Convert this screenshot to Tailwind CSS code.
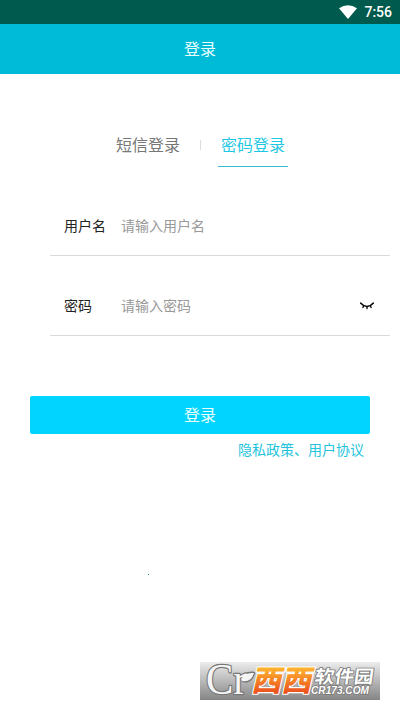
<!DOCTYPE html>
<html lang="zh-CN">
<head>
<meta charset="utf-8">
<meta name="viewport" content="width=device-width, initial-scale=1">
<title>登录</title>
<script src="https://cdn.jsdelivr.net/npm/@tailwindcss/browser@4"></script>
</head>
<body class="bg-white">
<div class="relative flex h-[710px] w-[400px] flex-col overflow-hidden bg-white font-['Noto_Sans_CJK_SC',sans-serif]">
  <div class="flex h-6 shrink-0 items-center justify-end bg-[#005a4d] pr-2">
    <svg class="mr-[7px] h-[14px] w-[18px]" viewBox="0 0 18 14"><path d="M0 3.3Q9-3 18 3.3L9 14Z" fill="#fff"/></svg>
    <span class="font-[Roboto,sans-serif] text-[14px] leading-6 font-medium text-white">7:56</span>
  </div>
  <header class="flex h-[50px] shrink-0 items-center justify-center bg-[#00bbd8] pb-[2px] text-base leading-none text-[#eaffff]">登录</header>

  <nav class="mt-[50px] ml-[108px] flex h-[43px] text-base leading-[40px]">
    <span class="w-20 text-center text-[#777]">短信登录</span>
    <i class="mt-4 ml-3 h-[10px] w-px bg-[#ddd]"></i>
    <span class="ml-[17px] w-[70px] border-b border-[#35b9cf] text-center text-[#1fc8e3]">密码登录</span>
  </nav>

  <form class="mt-[29px] ml-[50px] w-[340px] text-sm">
    <label class="flex h-[60px] items-center border-b border-[#dadada] pb-[2px]">
      <span class="ml-[14px] w-[57px] text-[#222]">用户名</span>
      <span class="text-[#999]">请输入用户名</span>
    </label>
    <label class="mt-5 flex h-[60px] items-center border-b border-[#dadada] pb-[2px]">
      <span class="ml-[14px] w-[57px] text-[#222]">密码</span>
      <span class="text-[#999]">请输入密码</span>
      <svg class="mt-[2px] mr-4 ml-auto h-[8px] w-[14px]" viewBox="0 0 14 8" fill="none" stroke="#000" stroke-linecap="round"><path d="M.8 1.2Q7 7.8 13.2 1.2" stroke-width="1.6"/><path d="M3.6 4 2.9 5.6M7 5V6.7M10.4 4l.7 1.6" stroke-width="1.3"/></svg>
    </label>
  </form>

  <button class="mt-[60px] ml-[30px] h-[38px] w-[340px] shrink-0 rounded-[2px] bg-[#00d4ff] pb-[2px] text-base leading-[36px] text-[#eaffff]">登录</button>
  <p class="mt-[5px] pr-9 text-right text-sm leading-5 text-[#23c4dc]">隐私政策、用户协议</p>

  <i class="absolute top-[574px] left-[148px] size-px bg-[#16879b]"></i>

  <svg class="absolute top-[658px] left-[200px] h-[42px] w-[180px] overflow-visible" viewBox="0 0 180 42">
    <defs>
      <linearGradient id="band" x2="0" y2="1"><stop stop-color="#ececec"/><stop offset=".45" stop-color="#bdbdbd"/><stop offset="1" stop-color="#858585"/></linearGradient>
      <linearGradient id="orange" x2="0" y2="1"><stop offset=".25" stop-color="#fdb52e"/><stop offset=".85" stop-color="#ec4f1d"/></linearGradient>
    </defs>
    <rect y="4" width="180" height="38" fill="url(#band)"/>
    <g font-family="Liberation Serif, serif" stroke-linejoin="round">
      <path d="M42 21Q45 14 54 15Q51 25 43 23Z" fill="#777" stroke="#777" stroke-width="2.6"/>
      <text x="6" y="36" font-size="45" textLength="41" lengthAdjust="spacingAndGlyphs" fill="#f5f5f5" stroke="#777" stroke-width="2.4" paint-order="stroke">Cr</text>
      <path d="M41 21Q45 14 54 15Q51 25 42 23Z" fill="#f5f5f5"/>
    </g>
    <text transform="translate(51 33) scale(1 1.08) skewX(-14)" font-family="Noto Sans CJK SC, sans-serif" font-weight="900" font-size="27" textLength="60" lengthAdjust="spacingAndGlyphs" stroke="#fff" stroke-width="2" paint-order="stroke" stroke-linejoin="round" fill="url(#orange)">西西</text>
    <g fill="#fff" stroke="#777" stroke-width="1.6" paint-order="stroke" stroke-linejoin="round">
      <text transform="translate(114 25) skewX(-8)" font-family="Noto Sans CJK SC, sans-serif" font-weight="700" font-size="18" textLength="59" lengthAdjust="spacingAndGlyphs">软件园</text>
      <text x="111" y="35.500" font-family="Liberation Sans, sans-serif" font-style="italic" font-weight="700" font-size="10" textLength="58" lengthAdjust="spacingAndGlyphs">CR173.COM</text>
    </g>
  </svg>
</div>
</body>
</html>
